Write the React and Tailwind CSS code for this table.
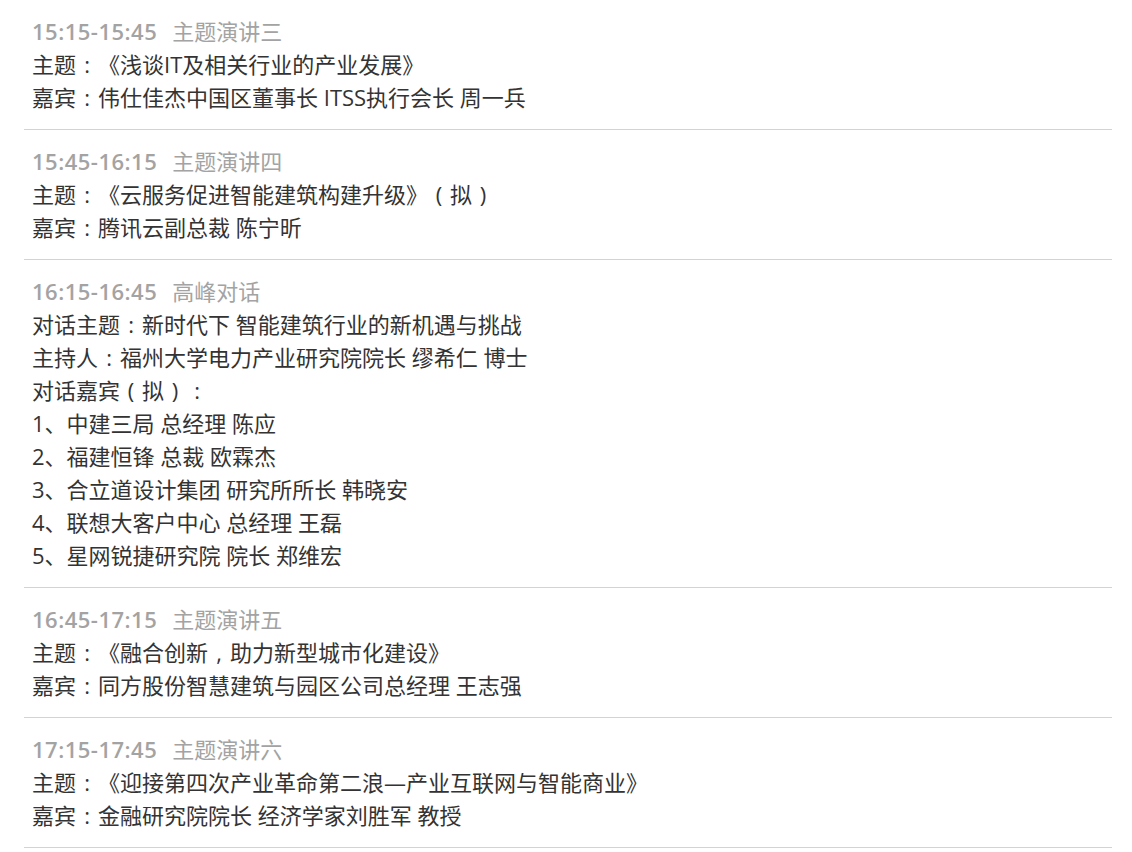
import React from "react";

const blocks = [
  {
    time: "15:15-15:45",
    title: "主题演讲三",
    lines: ["主题：《浅谈IT及相关行业的产业发展》", "嘉宾：伟仕佳杰中国区董事长 ITSS执行会长 周一兵"],
  },
  {
    time: "15:45-16:15",
    title: "主题演讲四",
    lines: ["主题：《云服务促进智能建筑构建升级》（拟）", "嘉宾：腾讯云副总裁 陈宁昕"],
  },
  {
    time: "16:15-16:45",
    title: "高峰对话",
    lines: [
      "对话主题：新时代下 智能建筑行业的新机遇与挑战",
      "主持人：福州大学电力产业研究院院长 缪希仁 博士",
      "对话嘉宾（拟）：",
      "1、中建三局 总经理 陈应",
      "2、福建恒锋 总裁 欧霖杰",
      "3、合立道设计集团 研究所所长 韩晓安",
      "4、联想大客户中心 总经理 王磊",
      "5、星网锐捷研究院 院长 郑维宏",
    ],
  },
  {
    time: "16:45-17:15",
    title: "主题演讲五",
    lines: ["主题：《融合创新，助力新型城市化建设》", "嘉宾：同方股份智慧建筑与园区公司总经理 王志强"],
  },
  {
    time: "17:15-17:45",
    title: "主题演讲六",
    lines: ["主题：《迎接第四次产业革命第二浪—产业互联网与智能商业》", "嘉宾：金融研究院院长 经济学家刘胜军 教授"],
  },
];

const PUNCT = { "：": ":", "，": ",", "（": "(", "）": ")" };

function Line({ text }) {
  const parts = text.split(/([：，（）])/);
  return (
    <div className="h-[33px] whitespace-nowrap [text-spacing-trim:space-all]">
      {parts.map((p, i) =>
        PUNCT[p] ? (
          <span key={i} className="inline-block w-[22px] text-center">
            {PUNCT[p]}
          </span>
        ) : (
          <React.Fragment key={i}>{p}</React.Fragment>
        )
      )}
    </div>
  );
}

export default function App() {
  return (
    <div
      className="w-[1132px] h-[852px] bg-white overflow-hidden pl-[24px] pr-[20px]"
      style={{ fontFamily: '"Open Sans", "Noto Sans CJK SC", sans-serif' }}
    >
      {blocks.map((b, i) => (
        <div key={i} className="border-b border-[#d3d3d3] py-[15px] pl-[8px] text-[22px] leading-[33px] text-[#333]">
          <div className="flex h-[33px] whitespace-nowrap text-[#a3a3a3]">
            <span className="font-semibold tracking-[0.5px]">{b.time}</span>
            <span className="ml-[15px]">{b.title}</span>
          </div>
          {b.lines.map((l, j) => (
            <Line key={j} text={l} />
          ))}
        </div>
      ))}
    </div>
  );
}
